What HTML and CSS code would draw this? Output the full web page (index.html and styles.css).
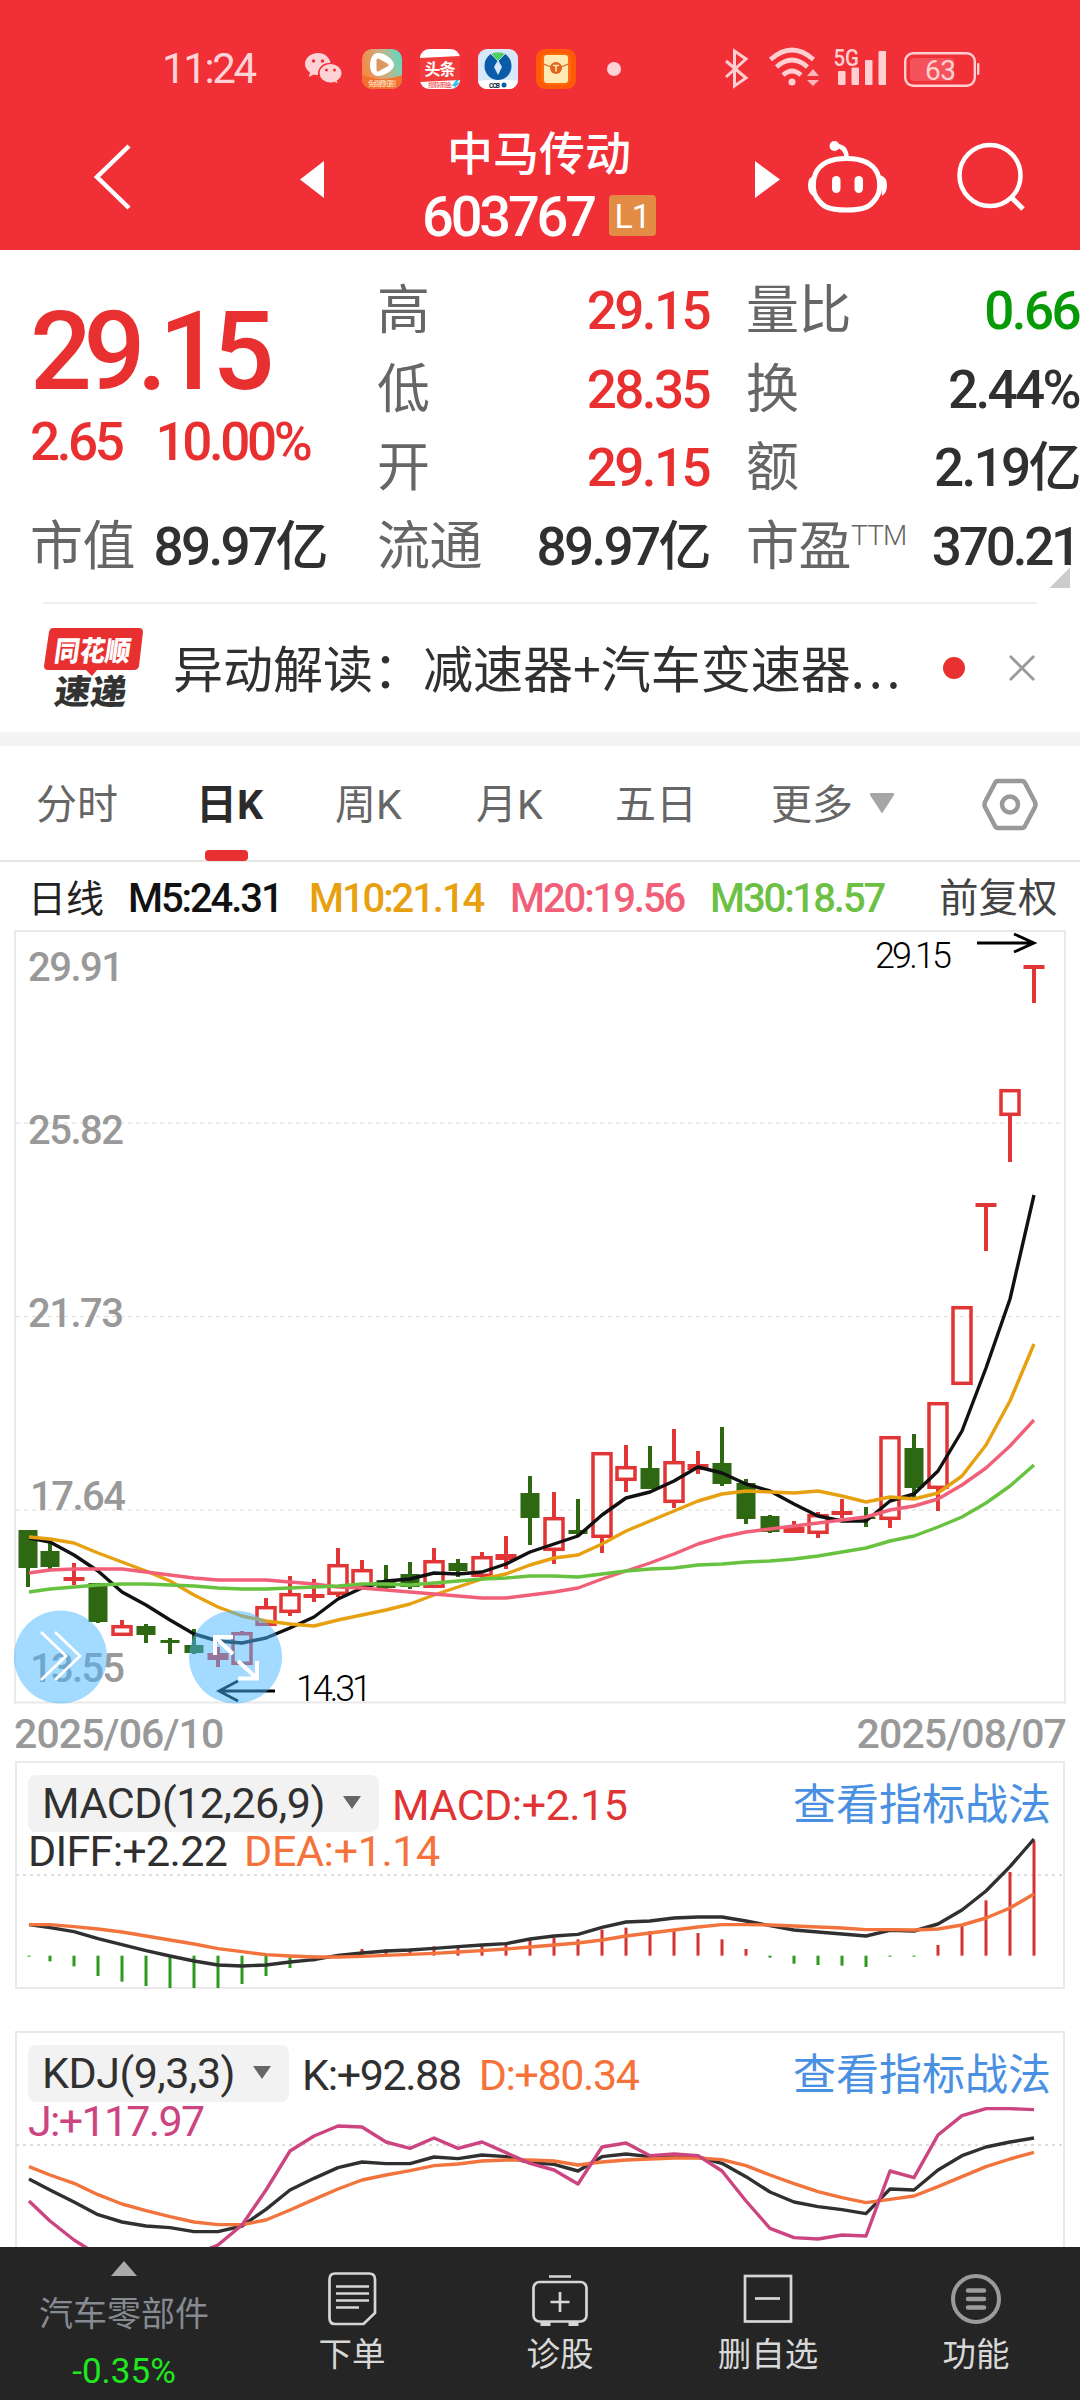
FILE: index.html
```html
<!DOCTYPE html>
<html lang="zh-CN">
<head>
<meta charset="utf-8">
<title>中马传动 603767</title>
<link rel="stylesheet" href="styles.css">
</head>
<body>
<header class="top">
  <div class="status">
    <span class="clock">11:24</span>
    <div class="notices">
      <svg class="wechat" width="38" height="32" viewBox="0 0 38 32">
        <path fill="#ffd3d6" d="M13 0C5.500 0 0 5 0 11c0 3.500 2 6.500 5 8.500L3.800 24l5-2.500c1.300.4 2.700.6 4.200.6A11 11 0 0 1 25.500 10C24.500 4 19.500 0 13 0Z"/>
        <path fill="#ffd3d6" stroke="#f12f37" stroke-width="1.200" d="M25.500 10.500c-6.500 0-11.500 4.300-11.500 9.800s5 9.800 11.500 9.800c1.400 0 2.700-.2 3.900-.6l4 2-1-3.600c2.900-1.800 4.700-4.500 4.700-7.600 0-5.500-5-9.800-11.600-9.800Z"/>
        <g fill="#f12f37"><circle cx="8.500" cy="8" r="1.700"/><circle cx="17.500" cy="8" r="1.700"/><circle cx="21.500" cy="17" r="1.500"/><circle cx="29.500" cy="17" r="1.500"/></g>
      </svg>
      <svg width="40" height="40" viewBox="0 0 40 40">
        <defs><linearGradient id="vid" x1="0" y1="0.300" x2="1" y2="0"><stop offset="0" stop-color="#f58a48"/><stop offset=".5" stop-color="#c4b285"/><stop offset="1" stop-color="#4fe0cf"/></linearGradient></defs>
        <rect width="40" height="40" rx="10" fill="url(#vid)"/>
        <path fill="#f4702f" d="M0 26q20 8 40 0v4a10 10 0 0 1-10 10H10A10 10 0 0 1 0 30Z"/>
        <path fill="#fff" d="M15 4c-5 1-7 7-7 12s2 11 8 11c5 0 16-5 16-11S21 3 15 4Z"/>
        <path fill="#dd9760" stroke="#dd9760" stroke-width="3" stroke-linejoin="round" d="M16 11v10l9-5Z"/>
        <text x="6" y="37" font-size="7" textLength="28" fill="#ffe6c8">免费看短剧</text>
      </svg>
      <svg width="40" height="40" viewBox="0 0 40 40">
        <rect width="40" height="40" rx="9" fill="#fff"/>
        <path fill="#f23c3c" d="M0 9 40 7v24L0 33Z"/>
        <text x="4.500" y="26" font-size="16" font-weight="700" fill="#fff" textLength="31">头条</text>
        <text x="8" y="38" font-size="6" fill="#e33" textLength="24">搜索领现金</text>
        <path fill="#2bc3e8" d="m36 31-4 6h3l-1 3 6-7-3 1 2-3Z"/>
      </svg>
      <svg width="40" height="40" viewBox="0 0 40 40">
        <rect width="40" height="40" rx="9" fill="#d7e8fb"/>
        <path fill="#fff" d="M0 32q20-3 40 0a9 9 0 0 1-9 8H9a9 9 0 0 1-9-8Z"/>
        <ellipse cx="20" cy="17" rx="13.500" ry="14" fill="#0a5ba8"/>
        <path fill="#4fcf5e" stroke="#d7e8fb" stroke-width=".8" d="M13 5q7-4 14 0l-7 7Z"/>
        <path fill="#d7e8fb" d="m20 11 4 7-4 8-4-8Z"/>
        <text x="11" y="38.500" font-size="6.500" font-weight="700" fill="#123" textLength="11">CCB</text><circle cx="26" cy="36" r="2.500" fill="#0a5ba8"/>
      </svg>
      <svg width="40" height="40" viewBox="0 0 40 40">
        <rect width="40" height="40" rx="9" fill="#ff5a08"/><rect x="5" y="4" width="30" height="32" rx="8" fill="#ff6d0b"/>
        <rect x="8" y="6" width="24" height="28" rx="3" fill="#ffe9b4"/>
        <path d="M8 15q5 3 12 3t12-3" fill="none" stroke="#d9661a" stroke-width="1.400"/>
        <circle cx="20" cy="19" r="6" fill="#e2641b"/><path d="M17 16.500h6M20 16.500v6" stroke="#ffe9b4" stroke-width="1.600"/>
      </svg>
      <i class="more-dot"></i>
    </div>
    <svg class="signals" width="256" height="48" viewBox="725 44 256 48">
      <g fill="none" stroke="#ffcfd2">
        <path stroke-width="3" d="M726 61l20 17-11.500 8V51l11.500 8-20 18"/>
        <g stroke-width="4.600"><path d="M770.500 59.500q21.500-19 43 0"/><path d="M776.500 67q15.500-14 31 0"/><path d="M783 75q9-8 18 0"/></g>
        <rect x="905.200" y="53.200" width="69.600" height="32.600" rx="8" stroke-width="2.400"/>
      </g>
      <g fill="#ffcfd2">
        <circle cx="792" cy="82" r="3.500"/><path d="m807 76 6-7 6 7ZM807 80h12l-6 6Z" opacity=".85"/>
        <rect x="838" y="71" width="7.500" height="14" rx="1"/><rect x="851.500" y="67.500" width="7.500" height="17.500" rx="1"/><rect x="865" y="60" width="7.500" height="25" rx="1"/><rect x="878.500" y="51" width="7.500" height="34" rx="1"/>
        <rect x="977" y="63" width="2.400" height="12" rx="1"/>
      </g>
      <rect x="910" y="58" width="44" height="23" rx="4" fill="#f5535b"/>
      <text x="833.500" y="65.500" font-size="23.500" font-weight="500" fill="#ffcfd2" textLength="25.500" lengthAdjust="spacingAndGlyphs">5G</text>
      <text x="925" y="79.500" font-size="28" fill="#ffcfd2" textLength="31">63</text>
    </svg>
  </div>
  <nav class="titlebar">
    <svg class="back" width="38" height="66" viewBox="93 144 38 66"><path d="m129 146-32 31 32 31" fill="none" stroke="#fff" stroke-width="4.500"/></svg>
    <svg class="prev" width="24" height="38" viewBox="0 0 24 38"><path d="M24 1v37L0 19.500Z" fill="#fff"/></svg>
    <div class="stock">
      <h1>中马传动</h1>
      <div class="code"><span>603767</span><b>L1</b></div>
    </div>
    <svg class="next" width="25" height="38" viewBox="0 0 25 38"><path d="M0 1v37l25-18.500Z" fill="#fff"/></svg>
    <svg class="robot" width="80" height="74" viewBox="807 141 80 74">
      <path d="M846.500 159.500c17 0 26.500 5 31 15 3 7 3 18-1 24-6 9-11 12.500-30 12.500s-24-3.500-30-12.500c-4-6-4-17-1-24 4.500-10 14-15 31-15Z" fill="none" stroke="#fff" stroke-width="5"/>
      <path d="M846.500 159c0-6-2-12-11-12" fill="none" stroke="#fff" stroke-width="4.500"/>
      <circle cx="834.500" cy="147" r="5" fill="#fff"/>
      <path d="M815 176q-7 2-7 10t5 11ZM880 176q7 2 7 10t-5 11Z" fill="#fff"/>
      <rect x="832" y="177" width="8.500" height="17" rx="4.200" fill="#fff"/><rect x="854.500" y="177" width="8.500" height="17" rx="4.200" fill="#fff"/>
    </svg>
    <svg class="search" width="70" height="70" viewBox="956 144 70 70"><circle cx="990" cy="177.500" r="30.500" fill="none" stroke="#fff" stroke-width="4.500"/><path d="m1012 200 11 11" stroke="#fff" stroke-width="5"/></svg>
  </nav>
</header>

<section class="quote">
  <div class="col first">
    <div class="price">29.15</div>
    <div class="change"><span>2.65</span><span>10.00%</span></div>
    <div class="row"><label>市值</label><span>89.97亿</span></div>
  </div>
  <div class="col">
    <div class="row up"><label>高</label><span>29.15</span></div>
    <div class="row up"><label>低</label><span>28.35</span></div>
    <div class="row up"><label>开</label><span>29.15</span></div>
    <div class="row"><label>流通</label><span>89.97亿</span></div>
  </div>
  <div class="col">
    <div class="row down"><label>量比</label><span>0.66</span></div>
    <div class="row"><label>换</label><span>2.44%</span></div>
    <div class="row"><label>额</label><span>2.19亿</span></div>
    <div class="row"><label>市盈<sup>TTM</sup></label><span class="pe">370.21</span></div>
  </div>
  <i class="corner"></i>
</section>

<section class="news">
  <svg width="100" height="88" viewBox="44 622 100 88">
    <path fill="#e93030" d="M53 626h86q4 0 4 4l-4 34q-1 4-5 4H97l-5 6-6-6H48q-4 0-4-4l5-34q1-4 4-4Z"/>
    <g transform="translate(8 0) skewX(-8)" font-weight="900"><text x="138" y="659.500" font-size="28" fill="#fff" textLength="76" lengthAdjust="spacingAndGlyphs">同花顺</text><text x="144" y="702.500" font-size="34" fill="#333" textLength="72" lengthAdjust="spacingAndGlyphs">速递</text></g>
  </svg>
  <p>异动解读：减速器+汽车变速器<span>...</span></p>
  <i class="dot"></i>
  <svg class="close" width="26" height="26" viewBox="0 0 26 26"><path d="m1 1 24 24M25 1 1 25" stroke="#999" stroke-width="2.800"/></svg>
</section>

<nav class="tabs">
  <a class="t1">分时</a><a class="t2 on">日K</a><a class="t3">周K</a><a class="t4">月K</a><a class="t5">五日</a><a class="t6">更多<svg width="24" height="20" viewBox="0 0 24 20"><path d="M1 0h22q2 0 1 2L13 19q-1 2-2 0L0 2q-1-2 1-2Z" fill="#a6a6a6"/></svg></a>
  <svg class="hex" width="56" height="54" viewBox="982 777 56 54" fill="none" stroke="#999" stroke-width="4.500" stroke-linejoin="round"><path d="M998 780h24q2 0 3 2l10 19q1 3 0 5l-10 19q-1 2-3 2h-24q-2 0-3-2l-10-19q-1-2 0-5l10-19q1-2 3-2Z"/><circle cx="1010" cy="803.500" r="8"/></svg>
</nav>

<div class="averages"><span class="name">日线</span><span class="m5">M5:24.31</span><span class="m10">M10:21.14</span><span class="m20">M20:19.56</span><span class="m30">M30:18.57</span><span class="adj">前复权</span></div>

<svg id="kline" class="kline" width="1080" height="778" viewBox="0 927 1080 778">
  <rect x="15" y="931" width="1050" height="771.500" fill="none" stroke="#e9e9e9" stroke-width="2"/>
  <path d="M16 1123h1048M16 1316.500h1048M16 1510h1048" stroke="#dadada" stroke-width="1.200" stroke-dasharray="4 4"/>
  <g class="axis"><text x="28" y="980.500" textLength="96">29.91</text><text x="28" y="1143.500" textLength="96">25.82</text><text x="28" y="1326.500" textLength="96">21.73</text><text x="30" y="1509.500" textLength="96">17.64</text><text x="30" y="1682" textLength="95">13.55</text></g>
  <g id="candles"></g>
  <g id="maLines"></g>
  <g class="peak"><text x="875" y="967.500" textLength="77">29.15</text><text x="296" y="1701" textLength="76">14.31</text></g>
  <path d="M977 943h56M1014 934l20 9-20 9M275 1691h-56M238 1681l-19 10 19 10" fill="none" stroke="#000" stroke-width="2.800"/>
  <g fill="#48b6ff" fill-opacity=".5"><circle cx="60.500" cy="1657" r="46.500"/><circle cx="235.500" cy="1657" r="46.500"/></g>
  <g fill="none" stroke="#fff"><path stroke-width="2.800" d="m41 1632 25 24-25 24m14-48 25 24-25 24"/><path stroke-width="4" d="M233 1637h-18v18m0-18 18 17M257 1661v17.500h-19m19 0-19-17.500"/></g>
</svg>
<div class="dates"><span>2025/06/10</span><span>2025/08/07</span></div>

<section class="panel macd">
  <svg id="macd" width="1050" height="228" viewBox="15 1761 1050 228"><path class="half" d="M16 1875h1048"/></svg>
  <div class="legend">
    <div class="line"><button>MACD(12,26,9)<i></i></button><span class="red">MACD:+2.15</span><a>查看指标战法</a></div>
    <div class="line second"><span class="diff">DIFF:+2.22</span><span class="orange dea">DEA:+1.14</span></div>
  </div>
</section>
<section class="panel kdj">
  <svg id="kdj" width="1050" height="216" viewBox="15 2031 1050 216"><path class="half" d="M16 2145h1048"/></svg>
  <div class="legend">
    <div class="line"><button>KDJ(9,3,3)<i></i></button><span>K:+92.88</span><span class="orange">D:+80.34</span><a>查看指标战法</a></div>
    <div class="line second"><span class="pink">J:+117.97</span></div>
  </div>
</section>

<footer class="bottom">
  <div class="sector"><i></i><span>汽车零部件</span><em>-0.35%</em></div>
  <div class="act"><svg width="56" height="56" viewBox="324 2270 56 56" fill="none" stroke="#d6d6d6" stroke-width="2.700"><path d="M335 2273.500h34q6 0 6 6V2313l-11.500 11H335q-5.500 0-5.500-6v-38.500q0-6 5.500-6Z"/><path d="M336 2286.500h33M336 2293.500h33M336 2300.500h33M336 2307.500h23"/></svg><span>下单</span></div>
  <div class="act"><svg width="60" height="56" viewBox="530 2270 60 56" fill="none" stroke="#d6d6d6" stroke-width="2.700"><rect x="533.500" y="2282" width="53" height="39.500" rx="6"/><path d="M549 2276.500h22M550.500 2302h19M560 2292v20"/><path stroke-width="4" d="M540.500 2324h10M568.500 2324h10"/></svg><span>诊股</span></div>
  <div class="act"><svg width="56" height="56" viewBox="740 2270 56 56" fill="none" stroke="#d6d6d6" stroke-width="2.700"><rect x="745" y="2276" width="46" height="45.500"/><path d="M755 2298.500h25"/></svg><span>删自选</span></div>
  <div class="act"><svg width="56" height="56" viewBox="948 2270 56 56" fill="none" stroke="#9b9b9b" stroke-width="4"><circle cx="976" cy="2299" r="23"/><path stroke-width="4.500" stroke-linecap="round" d="M968 2290.500h16M968 2299h16M968 2307.500h16"/></svg><span>功能</span></div>
</footer>
<script src="chart.js"></script>
</body>
</html>
```
FILE: styles.css
```css
* { box-sizing: border-box; }
body { margin: 0; width: 1080px; height: 2400px; overflow: hidden; display: flex; flex-direction: column; background: #fff; color: #303030; font-family: Roboto, "Noto Sans CJK SC", sans-serif; }
body > * { flex: none; }
svg { display: block; flex: none; }
svg text { font-family: Roboto, "Noto Sans CJK SC", sans-serif; }
i, em { font-style: normal; }
.signals, .kline, .news svg { overflow: visible; }

.top { height: 250px; background: #f12f37; color: #fff; padding-top: 42px; }
.status { height: 54px; display: flex; align-items: center; color: #ffd3d6; }
.clock { margin-left: 162px; width: 143px; font-size: 42px; line-height: 54px; letter-spacing: -2.400px; }
.notices { display: flex; align-items: center; gap: 18px; }
.wechat { margin-right: 1px; }
.more-dot { width: 14px; height: 14px; border-radius: 50%; background: #ffd3d6; margin-left: 13px; }
.signals { margin-left: 104px; margin-top: -2px; }
.titlebar { height: 154px; display: flex; align-items: center; padding-top: 7px; }
.back { margin-left: 93px; }
.prev { margin-left: 169px; margin-top: 4px; }
.stock { width: 431px; padding: 17px 0 0 98px; height: 140px; }
.stock h1 { margin: 0 0 0 25px; font-size: 46px; font-weight: 500; line-height: 60px; }
.code { display: flex; align-items: center; height: 66px; gap: 15px; font-size: 56px; font-weight: 500; line-height: 66px; letter-spacing: -3.200px; }
.code b { width: 47px; height: 41px; border-radius: 4px; background: #e28c46; font-size: 34px; font-weight: 400; line-height: 42px; text-align: center; letter-spacing: -1px; margin-top: -3px; }
.next { margin-top: 4px; }
.robot { margin-left: 27px; }
.search { margin-left: 69px; }

.quote { height: 352px; padding: 22px 0 0 30px; display: grid; grid-template-columns: 296px 332px 420px; justify-content: start; position: relative; }
.quote .col:nth-child(2) { margin-left: 51px; width: 332px; }
.quote .col:nth-child(3) { margin-left: 88px; width: 333px; }
.row { height: 78.500px; display: flex; justify-content: space-between; line-height: 78px; font-size: 53px; }
.row label { color: #666; font-size: 53px; letter-spacing: -.500px; white-space: nowrap; }
.row span { font-weight: 500; letter-spacing: -2.600px; white-space: nowrap; }
.row .pe { margin-right: 1px; letter-spacing: -3.200px; }
.row sup { font-size: 28px; line-height: 0; vertical-align: 20px; font-weight: 300; letter-spacing: -.8px; }
.up span, .price, .change { color: #e93030; }
.down span { color: #069a06; }
.price { height: 160px; font-size: 109px; font-weight: 500; line-height: 160px; letter-spacing: -8.400px; }
.change { height: 75.500px; line-height: 20px; font-size: 53px; display: flex; gap: 34px; }
.change span { font-weight: 500; letter-spacing: -3.400px; }
.corner { position: absolute; right: 10px; bottom: 14px; width: 20px; height: 20px; background: linear-gradient(135deg, transparent 50%, #ccc 50%); }

.news { margin: 0 43px; width: 994px; height: 130px; border-top: 2px solid #eee; display: flex; align-items: center; }
.news > svg { margin-left: 1px; }
.news p { margin: 0 0 0 29px; width: 770px; font-size: 50px; line-height: 70px; white-space: nowrap; font-family: "Noto Sans CJK SC", sans-serif; padding-bottom: 4px; }
.news p span { letter-spacing: 4px; }
.dot { width: 22px; height: 22px; border-radius: 50%; background: #e93030; }
.news .close { margin-left: 44px; }

.tabs { height: 130px; border-top: 14px solid #f4f4f4; border-bottom: 2px solid #e6e6e6; display: flex; align-items: stretch; color: #666; font-size: 41px; line-height: 118px; padding-left: 36px; }
.tabs a { display: flex; align-items: center; white-space: nowrap; padding-top: 4px; }
.t1 { width: 160px; } .t2 { width: 139px; } .t3 { width: 141px; } .t4 { width: 139px; } .t5 { width: 156px; } .t6 { width: 211px; gap: 17px; }
.t6 svg { margin-top: -4px; }
.tabs .on { color: #2b2b2b; font-weight: 700; position: relative; }
.on::after { content: ""; position: absolute; left: 9px; bottom: -1px; width: 43px; height: 11px; border-radius: 4px; background: #e93030; }
.hex { align-self: center; margin-top: 3px; }

.averages { height: 65px; display: flex; padding-left: 28px; font-size: 40px; font-weight: 500; line-height: 74px; letter-spacing: -2.100px; white-space: nowrap; }
.averages .name { width: 100px; font-size: 38px; font-weight: 400; letter-spacing: 0; color: #222; }
.m5 { width: 181px; color: #111; } .m10 { width: 201px; color: #e6a010; } .m20 { width: 200px; color: #f25f78; } .m30 { width: 229px; color: #6cc044; }
.averages .adj { font-size: 39.500px; font-weight: 400; letter-spacing: 0; color: #444; }

.axis text { font-size: 40px; font-weight: 500; fill: #999; }
.peak text { font-size: 36px; font-weight: 300; fill: #000; }
.dates { height: 56px; padding: 0 14px; display: flex; justify-content: space-between; color: #999; font-size: 41px; font-weight: 500; line-height: 58px; letter-spacing: -.900px; }

.panel { margin-left: 15px; width: 1050px; display: grid; border: 2px solid #e9e9e9; }
.panel > * { grid-area: 1 / 1; }
.panel > svg { margin: -2px; }
.macd { height: 228px; }
.kdj { height: 216px; margin-top: 42px; border-bottom: 0; }
.half { stroke: #dedede; stroke-width: 2; stroke-dasharray: 3 4; }
.legend { padding: 12px 12px 0 11px; font-size: 43px; letter-spacing: -.500px; white-space: nowrap; }
.line { height: 58px; display: flex; line-height: 61px; }
.line button { border: 0; margin: 0 13px 0 0; padding: 0 18px 0 14px; height: 57px; border-radius: 8px; background: #f2f2f2; color: #303030; font: inherit; line-height: 63px; letter-spacing: -.500px; display: flex; align-items: center; gap: 18px; }
.line button i { border: 9.500px solid transparent; border-top: 13px solid #666; border-bottom: 0; margin-top: -2px; }
.line span { margin-right: 18px; }
.line a { margin-left: auto; color: #4a90e2; font-size: 43px; letter-spacing: 0; }
.kdj .line span { letter-spacing: -1.400px; }
.kdj .second span { letter-spacing: -1.700px; }
.second { line-height: 37px; }
.second .diff { letter-spacing: -.700px; margin-right: 17px; }
.second .dea { letter-spacing: -.400px; }
.red { color: #e03333; } .orange { color: #f5733a; } .pink { color: #cc4480; }

.bottom { height: 153px; background: #252525; color: #d8d8d8; display: grid; grid-template-columns: 248px repeat(4, 208px); }
.sector { display: flex; flex-direction: column; align-items: center; color: #868a91; font-size: 34px; padding-top: 14px; }
.sector i { border: 13px solid transparent; border-bottom: 15px solid #aaa; border-top: 0; }
.sector span { line-height: 46px; margin-top: 15px; }
.sector em { color: #1fe81f; font-size: 35px; line-height: 40px; margin-top: 15px; }
.act { display: flex; flex-direction: column; align-items: center; padding-top: 23px; font-size: 33.500px; line-height: 46px; }
.act span { margin-top: 6px; }
```
FILE: chart.js
```js
const NS = 'http://www.w3.org/2000/svg';
const RED = '#e23535', GREEN = '#2f6812';
const x = i => 26 + 24 * i;
const lineX = i => (i ? x(i) : 29);

function add(parent, name, attrs) {
  const el = document.createElementNS(NS, name);
  for (const k in attrs) el.setAttribute(k, attrs[k]);
  parent.appendChild(el);
}
function line(parent, ys, color, map = v => v, width = 3.4) {
  const points = ys.map((v, i) => `${lineX(i)},${map(v)}`).join(' ');
  add(parent, 'polyline', { points, fill: 'none', stroke: color, 'stroke-width': width, 'stroke-linejoin': 'round' });
}

// [type, wick top, body top, body bottom, wick bottom]
const candles = [
  ['g',1530,1530,1568,1587],['g',1543,1551,1567,1569],['r',1563,1577,1581,1585],['g',1583,1583,1622,1623],
  ['r',1620,1625,1636,1636],['g',1624,1626,1635,1643],['g',1638,1640,1643,1654],['g',1629,1645,1653,1654],
  ['r',1647,1653,1660,1667],['r',1631,1632,1665,1665],['r',1598,1606,1626,1626],['r',1576,1593,1613,1616],
  ['r',1579,1594,1598,1602],['r',1548,1564,1595,1597],['r',1560,1569,1587,1587],['g',1565,1580,1588,1589],
  ['g',1562,1574,1587,1589],['r',1548,1560,1588,1588],['g',1559,1563,1571,1577],['r',1552,1556,1577,1578],
  ['r',1536,1554,1560,1569],['g',1476,1493,1518,1545],['r',1492,1517,1551,1564],['g',1499,1530,1534,1535],
  ['r',1452,1452,1538,1553],['r',1445,1466,1481,1492],['g',1446,1468,1489,1489],['r',1429,1461,1503,1508],
  ['r',1451,1464,1470,1474],['g',1427,1463,1484,1486],['g',1479,1483,1519,1524],['g',1515,1516,1532,1533],
  ['r',1521,1527,1533,1533],['r',1512,1514,1534,1538],['r',1499,1511,1515,1518],['g',1507,1517,1519,1527],
  ['r',1436,1436,1520,1528],['g',1434,1448,1488,1498],['r',1402,1402,1489,1511],['r',1306,1306,1385,1385],
  ['r',1203,1203,1207,1251],['r',1089,1089,1116,1162],['r',965,965,969,1003]
];
const cg = document.getElementById('candles');
candles.forEach(([t, hi, top, bot, lo], i) => {
  const cx = i ? x(i) : 28, color = t === 'g' ? GREEN : RED;
  if (top > hi) add(cg, 'rect', { x: cx - 2, y: hi, width: 4, height: top - hi, fill: color });
  if (lo > bot) add(cg, 'rect', { x: cx - 2, y: bot, width: 4, height: lo - bot, fill: color });
  if (t === 'r' && bot - top > 8) add(cg, 'rect', { x: cx - 9, y: top + 1.7, width: 18, height: bot - top - 3.4, fill: 'none', stroke: color, 'stroke-width': 3.5 });
  else add(cg, 'rect', { x: cx - (t === 'g' ? 9.5 : 10.5), y: top, width: t === 'g' ? 19 : 21, height: bot - top, fill: color });
});

const ma = document.getElementById('maLines');
line(ma, [1538,1542,1555,1571,1592,1605,1620,1634,1641,1643,1638,1628,1617,1599,1588,1581,1579,1573,1574,1572,1564,1552,1544,1536,1515,1498,1492,1481,1467,1473,1484,1491,1504,1516,1521,1521,1501,1494,1471,1431,1368,1299,1195], '#111');
line(ma, [1537,1539,1543,1553,1562,1571,1581,1595,1607,1616,1621,1624,1626,1620,1615,1610,1604,1595,1587,1579,1574,1565,1558,1555,1544,1531,1521,1511,1501,1494,1491,1492,1493,1491,1496,1502,1497,1499,1493,1476,1445,1401,1344], '#e6a010');
line(ma, [1573,1570,1569,1569,1569,1572,1575,1578,1580,1580,1580,1582,1584,1587,1588,1590,1592,1594,1596,1598,1598,1595,1592,1588,1579,1571,1563,1554,1544,1537,1532,1529,1526,1523,1520,1517,1510,1506,1499,1485,1468,1446,1420], '#f25f78');
line(ma, [1592,1589,1587,1585,1584,1584,1585,1586,1588,1589,1589,1588,1587,1586,1584,1584,1585,1583,1581,1579,1578,1576,1576,1577,1574,1571,1569,1568,1565,1564,1562,1561,1559,1556,1552,1548,1541,1536,1527,1517,1503,1486,1465], '#67c23f');

const macd = document.getElementById('macd');
const my = v => 1740 + v / 3;
[650,664,679,708,725,738,744,744,744,732,708,684,664,643,627,628,626,619,621,619,615,600,593,598,569,563,573,573,579,598,627,653,671,675,677,681,650,650,615,555,481,396,303].forEach((v, i) => {
  const a = my(647), b = my(v);
  add(macd, 'rect', { x: lineX(i) - 1.5, y: Math.min(a, b), width: 3, height: Math.abs(a - b), fill: v > 647 ? '#2d9a1f' : '#d23333' });
});
line(macd, [554,563,575,596,614,632,648,663,675,678,675,666,659,646,639,633,630,625,620,615,611,597,588,583,562,546,543,534,531,531,543,557,570,576,582,588,571,573,552,510,453,380,297], '#303030', my);
line(macd, [554,554,560,567,576,588,600,612,626,635,644,648,651,651,649,646,643,640,636,632,627,621,615,609,600,588,579,570,561,554,554,555,558,561,564,569,569,570,567,555,534,504,462], '#f2733c', my);

const kdj = document.getElementById('kdj');
const ky = v => 2010 + v / 3;
line(kdj, [507,540,576,614,636,648,653,665,665,648,598,540,505,473,456,461,461,441,446,435,440,458,463,483,440,432,440,441,441,460,500,546,576,590,599,611,537,540,480,437,411,396,384], '#303030', ky);
line(kdj, [470,495,520,554,582,602,620,636,644,644,630,600,568,537,510,495,482,467,462,453,450,450,453,465,456,450,447,444,444,449,467,495,521,545,563,578,568,558,530,500,470,447,427], '#f2733c', ky);
line(kdj, [573,633,690,735,770,780,770,735,705,645,540,423,378,348,351,396,415,384,415,396,428,460,480,522,411,399,437,432,437,483,573,655,683,687,675,678,483,503,375,317,296,296,299], '#cc4480', ky);
```
